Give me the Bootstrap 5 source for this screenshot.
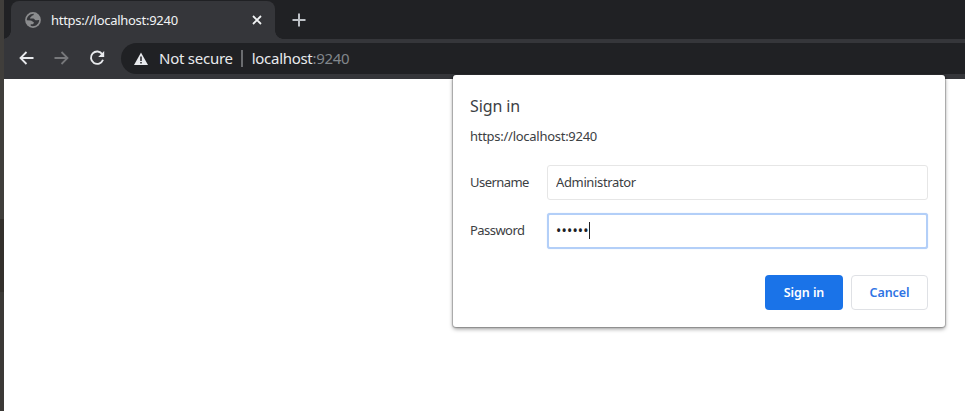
<!DOCTYPE html>
<html lang="en">
<head>
<meta charset="utf-8">
<title>https://localhost:9240</title>
<link href="https://cdn.jsdelivr.net/npm/bootstrap@5.3.0/dist/css/bootstrap.min.css" rel="stylesheet">
<style>
body{font-family:"Noto Sans","Open Sans",sans-serif;font-size:13px;line-height:18px;color:#3c4043;height:411px;background:#fff}
.edge{width:4px;background:linear-gradient(#403e3b 0 219px,#33302c 219px 292px,#3b3936 292px)}
.strip{height:39px;background:#202124;padding:1px 0 0 7px}
.tab-active{width:264px;height:38px;background:#35363a;border-radius:8px 8px 0 0;padding:0 12px 0 14px;color:#f1f3f4;position:relative}
.tab-active::before,.tab-active::after{content:"";position:absolute;bottom:0;width:8px;height:8px}
.tab-active::before{left:-8px;background:radial-gradient(circle at 0 0,transparent 7.5px,#35363a 8px)}
.tab-active::after{right:-8px;background:radial-gradient(circle at 100% 0,transparent 7.5px,#35363a 8px)}
.tab-label{font-size:13px;letter-spacing:-.28px;padding-left:10px}
.toolbar{height:40px;background:#35363a;padding:4px 0 5px 15px}
.toolbar>svg{margin-bottom:1px}
.forward{margin:0 15px 0 15px}
.address{height:31px;background:#202124;border-radius:16px 0 0 16px;padding:0 0 1px 13px;margin-left:14px;font-size:15px;color:#e8eaed}
.secure-text{letter-spacing:-.25px;padding-left:11px}
.host-text{letter-spacing:-.3px}
.sep{width:2px;height:17px;background:#6b6d70;margin:0 9px 0 8px}
.port{color:#80868b}
.dialog-box{position:absolute;left:453px;top:75px;width:492px;height:252px;background:#fff;border-radius:3px;box-shadow:0 0 1px 1px rgba(0,0,0,.22),0 2px 4px rgba(0,0,0,.4);padding:21px 17px 17px 17px}
.heading{font-size:16px;line-height:20px;font-weight:400;letter-spacing:-.1px}
.origin{margin-top:11px;letter-spacing:-.27px}
.fields{margin-top:20px;row-gap:13px}
.fields label{width:77px;letter-spacing:-.55px;padding-bottom:2px}
.fields .form-control{height:35px;padding:0 8px 2px;border:1px solid #e6e6e6;border-radius:3px;font-size:13px;line-height:18px;color:#3c4043;letter-spacing:-.36px}
.fields .active-field{border:2px solid #b3cff8;box-shadow:0 0 1px #b3cff8;padding:0 7px;height:36px}
.fields .bullets{letter-spacing:.2px;font-size:14px;color:#202124}
.caret{width:1px;height:17px;background:#202124;margin-bottom:2px}
.actions{margin-top:26px;gap:8px}
.actions .btn{width:78px;height:35px;padding:1px 0 0;font-size:12.5px;font-weight:600;border-radius:4px;letter-spacing:-.05px}
.actions .accept{background:#1a73e8;color:#fff}
.actions .dismiss{border:1px solid #dfe1e5;color:#2f74e4;width:77px}
</style>
<script src="https://cdn.jsdelivr.net/npm/bootstrap@5.3.0/dist/js/bootstrap.bundle.min.js"></script>
</head>
<body class="d-flex overflow-hidden">
<div class="edge flex-shrink-0"></div>
<div class="flex-grow-1">
  <div class="strip d-flex">
    <div class="tab-active d-flex align-items-center">
      <svg width="16" height="16" viewBox="0 0 16 16"><circle cx="8" cy="8" r="7.9" fill="#8b8c8e"/><path d="M8.800 1.700C9 3 8 3.600 6.800 3.800 6.500 5 5.200 5 5 6.400H8.200C9.500 6.400 9.500 8 10.800 8.300 12 8.500 12.500 7.700 14.200 8 14 11.400 11.400 14.200 7.800 14.200 7 14.200 6.300 14 5.700 13.800V12.300H7.800C8.200 11.600 9 11.300 8.800 10.200 7.500 9.600 7 8.500 5.500 8.400L1.800 8.200C1.700 4.800 4.800 1.500 8.800 1.700Z" fill="#35363a"/></svg>
      <span class="tab-label flex-grow-1 text-nowrap">https://localhost:9240</span>
      <svg width="12" height="12" viewBox="0 0 12 12"><path d="M2 2l8 8M10 2l-8 8" stroke="#f1f3f4" stroke-width="1.8"/></svg>
    </div>
    <svg class="ms-3" width="16" height="38" viewBox="0 0 16 38"><path d="M1.500 19h13M8 12.500v13" stroke="#bdc1c6" stroke-width="2"/></svg>
  </div>
  <div class="toolbar d-flex align-items-center">
    <svg width="16" height="16" viewBox="0 0 16 16"><path d="M14.500 8H1.500M7.500 2L1.500 8 7.500 14" fill="none" stroke="#e8eaed" stroke-width="1.8"/></svg>
    <svg class="forward" width="22" height="16" viewBox="-3 0 22 16"><path d="M1.500 8h13M8.500 2L14.500 8 8.500 14" fill="none" stroke="#77787b" stroke-width="1.8"/></svg>
    <svg width="20" height="16" viewBox="-2 0 20 16"><path d="M13.300 4.200A6.200 6.200 0 1 0 14 9.800" fill="none" stroke="#e8eaed" stroke-width="1.900"/><path d="M15.200 1V7H9.200Z" fill="#e8eaed"/></svg>
    <div class="address d-flex align-items-center flex-grow-1 text-nowrap">
      <svg width="14" height="13" viewBox="0 0 14 13"><path d="M7 .5L14 13H0Z" fill="#e8eaed"/><path d="M7 4.500V9M7 10v1.500" stroke="#202124" stroke-width="1.500"/></svg>
      <span class="secure-text">Not secure</span><span class="sep"></span><span class="host-text">localhost<span class="port">:9240</span></span>
    </div>
  </div>
</div>
<form class="dialog-box" onsubmit="return false">
  <h1 class="heading m-0">Sign in</h1>
  <div class="origin">https://localhost:9240</div>
  <div class="fields d-grid">
    <div class="d-flex align-items-center"><label for="user">Username</label><input id="user" class="form-control flex-grow-1 w-auto" value="Administrator"></div>
    <div class="d-flex align-items-center"><label>Password</label><div class="form-control active-field d-flex align-items-center flex-grow-1 w-auto"><span class="bullets">••••••</span><span class="caret"></span></div></div>
  </div>
  <div class="actions d-flex justify-content-end"><button class="btn accept" type="button">Sign in</button><button class="btn dismiss" type="button">Cancel</button></div>
</form>
</body>
</html>
